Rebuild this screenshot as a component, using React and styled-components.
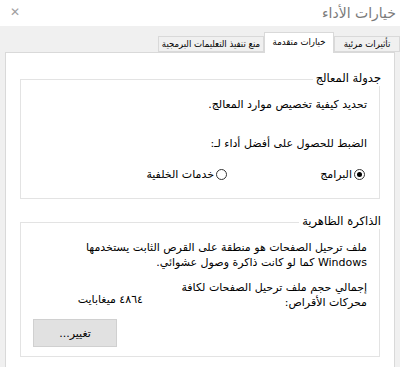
import React from "react";
import styled, { createGlobalStyle } from "styled-components";

const Global = createGlobalStyle`
  html, body { margin: 0; padding: 0; }
  body {
    background: #f0f0f0;
    font-family: "DejaVu Sans", "Noto Sans", sans-serif;
    color: #000;
    overflow: hidden;
  }
`;

const Window = styled.div`
  direction: rtl;
  width: 400px;
  height: 367px;
  display: flex;
  flex-direction: column;
  background: #f0f0f0;
`;

const TitleBar = styled.div`
  height: 26px;
  background: #fff;
  display: flex;
  align-items: center;
  justify-content: space-between;
  padding: 0 4px 0 10px;
  box-sizing: border-box;
`;

const Title = styled.span`
  font-size: 14px;
  color: #7a7a7a;
  margin-top: -1px;
`;

const Close = styled.span`
  font-size: 12px;
  color: #a0a0a0;
  margin-top: -2px;
`;

const TabRow = styled.div`
  display: flex;
  align-items: flex-end;
  height: 20px;
  margin-top: 6px;
  padding-right: 0;
`;

const Tab = styled.div`
  box-sizing: border-box;
  height: ${(p) => (p.$active ? "21px" : "16px")};
  width: ${(p) => p.$w}px;
  background: ${(p) => (p.$active ? "#fff" : "#f0f0f0")};
  border: 1px solid #d9d9d9;
  border-bottom: ${(p) => (p.$active ? "none" : "1px solid #d9d9d9")};
  margin-bottom: ${(p) => (p.$active ? "-1px" : "0")};
  position: relative;
  z-index: ${(p) => (p.$active ? 1 : 0)};
  font-family: "DejaVu Sans Condensed", "DejaVu Sans", sans-serif;
  font-stretch: condensed;
  font-size: 9.5px;
  display: flex;
  align-items: center;
  justify-content: center;
  white-space: nowrap;
  overflow: hidden;
  padding-bottom: ${(p) => (p.$active ? "3px" : "1px")};
`;

const Panel = styled.div`
  flex: 1;
  margin: 0 5px;
  background: #fff;
  border: 1px solid #d9d9d9;
  border-bottom: none;
  padding: 26px 14px 0 14px;
  display: flex;
  flex-direction: column;
  gap: 23px;
`;

const Group = styled.div`
  border: 1px solid #e3e3e3;
  height: ${(p) => p.$h}px;
  box-sizing: border-box;
  display: flex;
  flex-direction: column;
  padding: 0 12px 0 12px;
`;

const Legend = styled.div`
  align-self: flex-start;
  background: #fff;
  margin: -9px -14px 0 0;
  padding: 0 0 0 3px;
  font-size: 11.5px;
  line-height: 15px;
`;

const Line = styled.div`
  font-size: 11px;
  line-height: 15px;
  margin-top: ${(p) => p.$mt || 0}px;
  white-space: nowrap;
`;

const RadioRow = styled.div`
  display: flex;
  margin-top: 16px;
  padding-right: 2px;
`;

const RadioItem = styled.label`
  display: flex;
  align-items: center;
  gap: 2px;
  font-size: 11px;
  line-height: 15px;
  width: ${(p) => p.$w || "auto"};
`;

const RadioCircle = styled.span`
  width: 11px;
  height: 11px;
  box-sizing: border-box;
  border-radius: 50%;
  border: 1px solid #333;
  display: flex;
  align-items: center;
  justify-content: center;
  &::after {
    content: "";
    display: ${(p) => (p.$checked ? "block" : "none")};
    width: 5px;
    height: 5px;
    border-radius: 50%;
    background: #000;
  }
`;

const SizeRow = styled.div`
  display: flex;
  align-items: flex-end;
  margin-top: 10px;
`;

const SizeLabel = styled.div`
  width: 210px;
  font-size: 11px;
  line-height: 15px;
  white-space: nowrap;
`;

const SizeValue = styled.div`
  font-size: 11px;
  line-height: 15px;
  margin: 0 14px 3px 0;
  white-space: nowrap;
`;

const ButtonRow = styled.div`
  display: flex;
  justify-content: flex-end;
  margin: 9px -1px 0 0;
`;

const Button = styled.button`
  width: 84px;
  height: 28px;
  background: #e1e1e1;
  border: 1px solid #d0d0d0;
  font-family: inherit;
  font-size: 11px;
  color: #000;
  padding: 0;
`;

export default function App() {
  return (
    <>
      <Global />
      <Window>
        <TitleBar>
          <Title>خيارات الأداء</Title>
          <Close>✕</Close>
        </TitleBar>
        <TabRow>
          <Tab $w={66}>تأثيرات مرئية</Tab>
          <Tab $w={70} $active>خيارات متقدمة</Tab>
          <Tab $w={106}>منع تنفيذ التعليمات البرمجية</Tab>
        </TabRow>
        <Panel>
          <Group $h={120}>
            <Legend>جدولة المعالج</Legend>
            <Line $mt={11}>تحديد كيفية تخصيص موارد المعالج.</Line>
            <Line $mt={24}>الضبط للحصول على أفضل أداء لـ:</Line>
            <RadioRow>
              <RadioItem $w="138px">
                <RadioCircle $checked />
                البرامج
              </RadioItem>
              <RadioItem>
                <RadioCircle />
                خدمات الخلفية
              </RadioItem>
            </RadioRow>
          </Group>
          <Group $h={135}>
            <Legend>الذاكرة الظاهرية</Legend>
            <Line $mt={11}>
              ملف ترحيل الصفحات هو منطقة على القرص الثابت يستخدمها
              <br />
              Windows كما لو كانت ذاكرة وصول عشوائي.
            </Line>
            <SizeRow>
              <SizeLabel>
                إجمالي حجم ملف ترحيل الصفحات لكافة
                <br />
                محركات الأقراص:
              </SizeLabel>
              <SizeValue>٤٨٦٤ ميغابايت</SizeValue>
            </SizeRow>
            <ButtonRow>
              <Button>تغيير...</Button>
            </ButtonRow>
          </Group>
        </Panel>
      </Window>
    </>
  );
}
